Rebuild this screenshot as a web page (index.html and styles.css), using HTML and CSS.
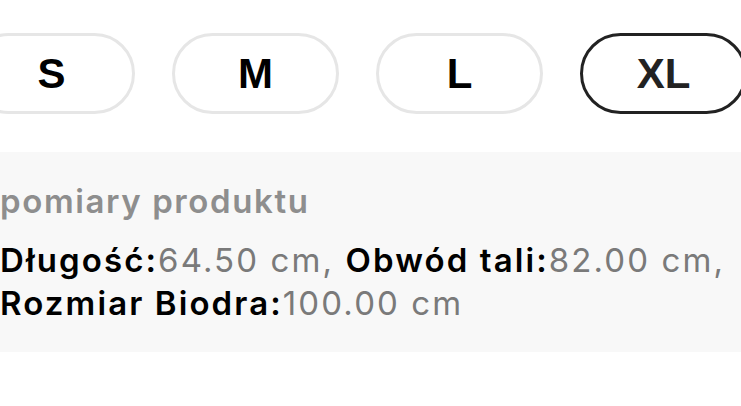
FILE: index.html
```html
<!DOCTYPE html>
<html lang="pl">
<head>
    <meta charset="UTF-8">
    <meta name="viewport" content="width=device-width, initial-scale=1.0">
    <title>Rozmiar</title>
    <link rel="stylesheet" href="styles.css">
</head>
<body>

<div class="sizes">
    <button class="size-button">S</button>
    <button class="size-button">M</button>
    <button class="size-button">L</button>
    <button class="size-button active">XL</button>
</div>

<!-- Wymiary wybranego rozmiaru -->
<div class="measurements">
    <p class="measurements-title">pomiary produktu</p>
    <p class="measurements-text">
        <b>Długość:</b><span>64.50 cm,</span> <b>Obwód tali:</b><span>82.00 cm,</span>
        <b>Rozmiar Biodra:</b><span>100.00 cm</span>
    </p>
</div>

</body>
</html>
```

FILE: styles.css
```css
body {
    margin: 0;
    background: #fff;
    font-family: Inter, "Noto Sans", sans-serif;
    overflow: hidden;
}
.sizes {
    display: flex;
    gap: 37px;
    margin-left: -32px;
    padding-top: 33px;
}
.size-button {
    flex: 0 0 167px;
    height: 81px;
    box-sizing: border-box;
    border: 3px solid #e6e6e6;
    border-radius: 41px;
    background: #fff;
    font-family: "Liberation Sans", Arial, sans-serif;
    font-weight: bold;
    font-size: 42px;
    color: #000;
    padding: 0;
    cursor: pointer;
}
.size-button.active {
    border-color: #222;
    color: #222;
}
.measurements {
    margin-top: 38px;
    height: 200px;
    box-sizing: border-box;
    background: #f8f8f8;
    padding: 28px 0 0 0;
}
.measurements p {
    margin: 0;
    font-size: 33px;
    line-height: 43px;
}
.measurements-title {
    color: #8e8e8e;
    font-weight: 600;
    letter-spacing: 1.6px;
    margin-bottom: 16px !important;
}
.measurements-text {
    letter-spacing: 2.1px;
}
.measurements-text b {
    font-weight: 600;
    color: #000;
}
.measurements-text span {
    color: #7a7a7a;
}
```
